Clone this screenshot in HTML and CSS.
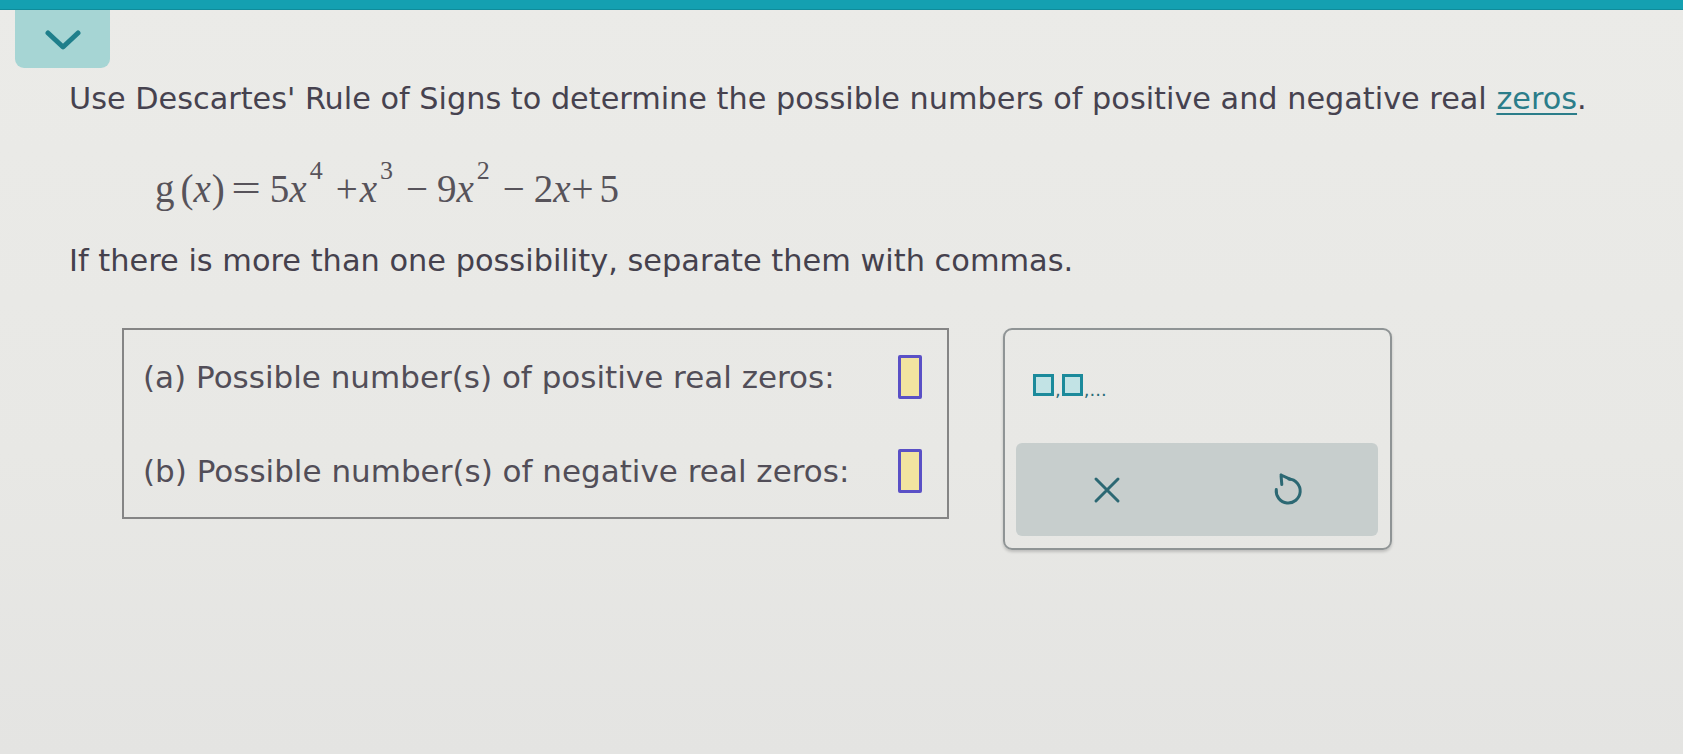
FILE: index.html
```html
<!DOCTYPE html>
<html lang="en">
<head>
<meta charset="utf-8">
<title>Descartes' Rule of Signs</title>
<link rel="stylesheet" href="styles.css">
</head>
<body>
<div class="topbar"></div>
<div class="tab">
  <svg class="chev" width="36" height="21" viewBox="0 0 36 21"><path d="M3 3 L18 17 L33 3" fill="none" stroke="#1f7f8b" stroke-width="5" stroke-linecap="round" stroke-linejoin="round"/></svg>
</div>
<main class="content">
  <p class="title">Use Descartes' Rule of Signs to determine the possible numbers of positive and negative real <span class="link">zeros</span>.</p>
  <div class="eq">
    <span class="fn">g</span><span class="paren">(</span><i class="var">x</i><span class="paren rp">)</span><span class="rel">=</span><span>5</span><i class="var">x</i><sup>4</sup><span class="bin">+</span><i class="var">x</i><sup>3</sup><span class="bin bin-wide">−</span><span>9</span><i class="var">x</i><sup>2</sup><span class="bin bin-wide">−</span><span>2</span><i class="var">x</i><span class="bin bin-tight">+</span><span>5</span>
  </div>
  <p class="note">If there is more than one possibility, separate them with commas.</p>
  <div class="work">
    <div class="answers">
      <span class="label">(a) Possible number(s) of positive real zeros:</span>
      <span class="input"></span>
      <span class="label">(b) Possible number(s) of negative real zeros:</span>
      <span class="input"></span>
    </div>
    <div class="panel">
      <div class="template"><span class="sq"></span><span class="sep">,</span><span class="sq"></span><span class="sep">,...</span></div>
      <div class="tools">
        <button class="tool" type="button" aria-label="Clear">
          <svg width="30" height="30" viewBox="0 0 30 30"><path d="M4 4 L26 26 M26 4 L4 26" fill="none" stroke="#2c6873" stroke-width="3" stroke-linecap="round"/></svg>
        </button>
        <button class="tool" type="button" aria-label="Undo">
          <svg width="34" height="38" viewBox="0 0 34 38"><path d="M18 8 A12 12 0 1 1 5.3 18.5" fill="none" stroke="#2c6873" stroke-width="3" stroke-linecap="round"/><path d="M19 8.2 L10 4 M10 4 L10.8 13.5" fill="none" stroke="#2c6873" stroke-width="3" stroke-linecap="round" stroke-linejoin="round"/></svg>
        </button>
      </div>
    </div>
  </div>
</main>
</body>
</html>
```
FILE: styles.css
```css
html, body {
  margin: 0;
  padding: 0;
}

body {
  width: 1683px;
  height: 754px;
  overflow: hidden;
  background: linear-gradient(180deg, #ebebe8 0%, #e8e8e5 60%, #e4e4e2 100%);
  font-family: "DejaVu Sans", Verdana, sans-serif;
  color: #46424f;
}

.topbar {
  height: 10px;
  background: #14a0b1;
  border-bottom: 1px solid #0f8c9b;
  box-sizing: border-box;
}

.tab {
  margin-left: 15px;
  width: 95px;
  height: 58px;
  background: #a6d5d4;
  border-radius: 0 0 9px 9px;
  display: flex;
  align-items: center;
  justify-content: center;
  padding-top: 2px;
  box-sizing: border-box;
}

.content {
  padding-left: 69px;
}

.title {
  margin: 11px 0 0;
  font-size: 30.3px;
  line-height: 40px;
  white-space: nowrap;
}

.link {
  color: #2b7d8a;
  text-decoration: underline;
  text-decoration-thickness: 2px;
  text-underline-offset: 4px;
}

.eq {
  margin-top: 46px;
  padding-left: 86px;
  height: 48px;
  font-family: "Liberation Serif", "Times New Roman", serif;
  font-size: 39px;
  line-height: 48px;
  color: #57535a;
  white-space: nowrap;
}

.eq .paren {
  margin-left: 6px;
}

.eq .rp {
  margin-left: 1px;
}

.eq .var {
  font-style: italic;
}

.eq .rel {
  display: inline-block;
  margin: 0 13px 0 10px;
  transform: scaleX(1.35);
}

.eq sup {
  font-size: 26px;
  line-height: 0;
  vertical-align: 23px;
  margin-left: 3px;
}

.eq .bin {
  margin: 0 2px 0 13px;
}

.eq .bin-wide {
  margin-right: 9px;
}

.eq .bin-tight {
  margin: 0 6px 0 1px;
}

.note {
  margin: 28px 0 0;
  font-size: 30.4px;
  line-height: 40px;
  color: #45414d;
  white-space: nowrap;
}

.work {
  margin-top: 47px;
  margin-left: 53px;
  display: flex;
  align-items: flex-start;
  gap: 54px;
}

.answers {
  width: 827px;
  box-sizing: border-box;
  border: 2px solid #858585;
  padding: 25px 25px 24px 19px;
  display: grid;
  grid-template-columns: 1fr 24px;
  grid-auto-rows: 44px;
  row-gap: 50px;
  align-items: center;
}

.label {
  font-size: 31px;
  line-height: 40px;
  color: #524e58;
  white-space: nowrap;
}

.input {
  width: 24px;
  height: 44px;
  box-sizing: border-box;
  border: 3px solid #5a50c6;
  border-radius: 2px;
  background: #f1e3a0;
}

.panel {
  width: 389px;
  box-sizing: border-box;
  border: 2px solid #8f9495;
  border-radius: 9px;
  padding: 44px 12px 12px 11px;
  box-shadow: 0 2px 3px rgba(0, 0, 0, 0.18);
}

.template {
  height: 22px;
  display: flex;
  align-items: flex-end;
  padding-left: 17px;
  color: #2a6c78;
  font-size: 18px;
  line-height: 18px;
}

.sq {
  width: 21px;
  height: 22px;
  box-sizing: border-box;
  border: 3px solid #1b8a9b;
  background: #c2e3e5;
}

.sep {
  margin-bottom: -3px;
  padding: 0 1px;
}

.tools {
  margin-top: 47px;
  height: 93px;
  background: #c7cecd;
  border-radius: 6px;
  display: grid;
  grid-template-columns: 1fr 1fr;
  align-items: center;
  justify-items: center;
}

.tool {
  border: 0;
  background: transparent;
  padding: 0;
  display: flex;
  align-items: center;
  justify-content: center;
}
```
